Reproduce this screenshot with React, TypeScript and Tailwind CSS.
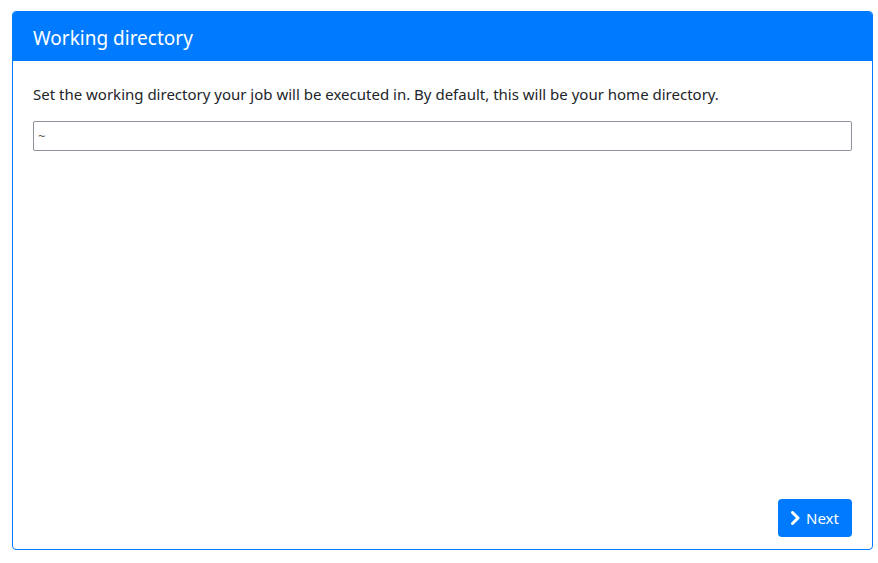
import { useState } from "react"

export default function App() {
  const [dir, setDir] = useState("~")

  return (
    <div className="w-[878px] h-[563px] bg-white pl-3 pr-[5px] pt-[11px] pb-[13px] font-['Noto_Sans',sans-serif] text-[#212529]">
      <div className="h-full flex flex-col border border-[#007bff] rounded-[4px] overflow-hidden">
        <div className="bg-[#007bff] text-white text-[19px] leading-[26px] px-5 pt-[13px] pb-[10px]">
          Working directory
        </div>
        <div className="flex-1 flex flex-col px-5 pt-[21px] pb-[12px]">
          <p className="text-[15px] leading-6 mb-[15px]">
            Set the working directory your job will be executed in. By default, this will be your home directory.
          </p>
          <input
            value={dir}
            onChange={e => setDir(e.target.value)}
            className="h-[30px] w-full border border-[#8f8f9d] rounded-[2px] px-[4px] text-[13px] text-[#555] outline-none"
          />
          <div className="mt-auto flex justify-end">
            <button className="h-[38px] w-[74px] pl-3 flex items-center gap-[5px] bg-[#007bff] text-white text-[15px] rounded-[4px]">
              <svg width="11" height="14" viewBox="0 0 11 14" fill="none">
                <path d="M2.5 1.5 L8 7 L2.5 12.5" stroke="white" strokeWidth="3" strokeLinecap="round" strokeLinejoin="round" />
              </svg>
              Next
            </button>
          </div>
        </div>
      </div>
    </div>
  )
}
